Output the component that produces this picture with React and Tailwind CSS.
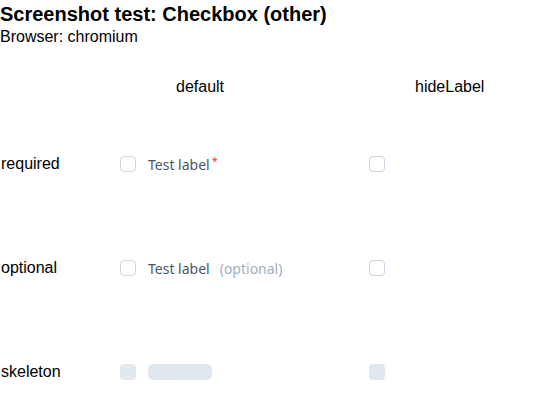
import React from "react";

const Box = ({ skeleton }) =>
  skeleton ? (
    <div className="w-4 h-4 rounded-[4px] bg-[#e2e8f0] shrink-0" />
  ) : (
    <div className="w-4 h-4 rounded-[4px] border border-[#cbd5e1] bg-white shrink-0" />
  );

export default function App() {
  const rowLabel = "text-[16px] text-black pl-px";
  return (
    <div className="bg-white w-[559px] h-[408px] overflow-hidden text-black" style={{ fontFamily: '"Liberation Sans", Arial, sans-serif' }}>
      <h1 className="text-[20px] font-bold leading-[23px] pt-[3px]">Screenshot test: Checkbox (other)</h1>
      <div className="text-[16px] leading-[18px] mt-[2px]">Browser: chromium</div>
      <div className="grid grid-cols-[120px_249px_1fr]">
        <div className="h-[66px]" />
        <div className="h-[66px] flex items-center pt-[16px] pl-[56px] text-[16px]">default</div>
        <div className="h-[66px] flex items-center pt-[16px] pl-[46px] text-[16px]">hideLabel</div>

        <div className={`h-[104px] flex items-center ${rowLabel}`}>required</div>
        <div className="h-[104px] flex items-center gap-3" style={{ fontFamily: '"Noto Sans", sans-serif' }}>
          <Box />
          <span className="text-[14px] text-[#4a5568] flex items-start">
            Test label<span className="text-[#e53e3e] text-[11px] ml-[2px] -mt-[1px]">*</span>
          </span>
        </div>
        <div className="h-[104px] flex items-center"><Box /></div>

        <div className={`h-[104px] flex items-center ${rowLabel}`}>optional</div>
        <div className="h-[104px] flex items-center gap-3" style={{ fontFamily: '"Noto Sans", sans-serif' }}>
          <Box />
          <span className="text-[14px] text-[#4a5568]">
            Test label<span className="text-[#a0aec0] ml-[10px]">(optional)</span>
          </span>
        </div>
        <div className="h-[104px] flex items-center"><Box /></div>

        <div className={`h-[104px] flex items-center ${rowLabel}`}>skeleton</div>
        <div className="h-[104px] flex items-center gap-3">
          <Box skeleton />
          <div className="w-16 h-4 rounded-[5px] bg-[#e2e8f0]" />
        </div>
        <div className="h-[104px] flex items-center"><Box skeleton /></div>
      </div>
    </div>
  );
}
